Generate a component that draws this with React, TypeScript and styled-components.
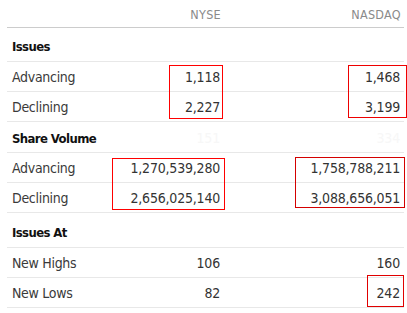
import React from "react";
import styled, { createGlobalStyle } from "styled-components";

const GlobalStyle = createGlobalStyle`
  html, body { margin: 0; padding: 0; background: #fff; }
  body {
    font-family: "DejaVu Sans Condensed", "Noto Sans", sans-serif;
    -webkit-font-smoothing: antialiased;
  }
`;

const Table = styled.div`
  position: relative;
  margin-left: 7px;
  width: 397px;
`;

const Row = styled.div<{ $h: number; $line?: string; $align?: string }>`
  display: grid;
  grid-template-columns: 105px 112px 180px;
  height: ${(p) => p.$h}px;
  align-items: ${(p) => p.$align || "center"};
  border-bottom: 1px solid ${(p) => p.$line || "#e8e8e8"};
`;

const ColHead = styled.div`
  text-align: right;
  padding-right: 3px;
  font-size: 12.5px;
  letter-spacing: 0.3px;
  color: #8a8a8a;
  padding-top: 2px;
`;

const SectionCell = styled.div<{ $pt: number }>`
  padding-left: 5px;
  padding-top: ${(p) => p.$pt}px;
  font-size: 13px;
  font-weight: 700;
  letter-spacing: -0.6px;
  color: #111;
  white-space: nowrap;
`;

const Label = styled.div`
  padding-left: 5px;
  font-size: 14px;
  letter-spacing: -0.3px;
  color: #3a3a3a;
  padding-top: 1px;
`;

const Num = styled.div<{ $ghost?: boolean }>`
  text-align: right;
  padding-right: 4px;
  font-size: 14px;
  letter-spacing: -0.2px;
  padding-top: 1px;
  color: ${(p) => (p.$ghost ? "#f7f7f7" : "#333")};
`;

const Mark = styled.div<{ $color: string }>`
  position: absolute;
  box-sizing: border-box;
  border: 1px solid ${(p) => p.$color};
  pointer-events: none;
`;

type Box = { l: number; t: number; w: number; h: number; c: string };

const boxes: Box[] = [
  { l: 162, t: 65, w: 54, h: 54, c: "#f00" },
  { l: 341, t: 65, w: 59, h: 53, c: "#ee0000" },
  { l: 105, t: 158, w: 113, h: 52, c: "#f00" },
  { l: 288, t: 157, w: 110, h: 51, c: "#d40000" },
  { l: 360, t: 275, w: 37, h: 32, c: "#e00000" },
];

export default function App() {
  return (
    <>
      <GlobalStyle />
      <Table>
        <Row $h={27} $line="#cccccc">
          <div />
          <ColHead>NYSE</ColHead>
          <ColHead>NASDAQ</ColHead>
        </Row>

        <Row $h={33} $align="start">
          <SectionCell $pt={11}>Issues</SectionCell>
        </Row>
        <Row $h={29}>
          <Label>Advancing</Label>
          <Num>1,118</Num>
          <Num>1,468</Num>
        </Row>
        <Row $h={29}>
          <Label>Declining</Label>
          <Num>2,227</Num>
          <Num>3,199</Num>
        </Row>

        <Row $h={30}>
          <SectionCell $pt={3}>Share Volume</SectionCell>
          <Num $ghost>151</Num>
          <Num $ghost>334</Num>
        </Row>
        <Row $h={29}>
          <Label>Advancing</Label>
          <Num>1,270,539,280</Num>
          <Num>1,758,788,211</Num>
        </Row>
        <Row $h={29}>
          <Label>Declining</Label>
          <Num>2,656,025,140</Num>
          <Num>3,088,656,051</Num>
        </Row>

        <Row $h={34} $align="start">
          <SectionCell $pt={12}>Issues At</SectionCell>
        </Row>
        <Row $h={29}>
          <Label>New Highs</Label>
          <Num>106</Num>
          <Num>160</Num>
        </Row>
        <Row $h={29}>
          <Label>New Lows</Label>
          <Num>82</Num>
          <Num>242</Num>
        </Row>

        {boxes.map((b, i) => (
          <Mark
            key={i}
            $color={b.c}
            style={{ left: b.l, top: b.t, width: b.w, height: b.h }}
          />
        ))}
      </Table>
    </>
  );
}
